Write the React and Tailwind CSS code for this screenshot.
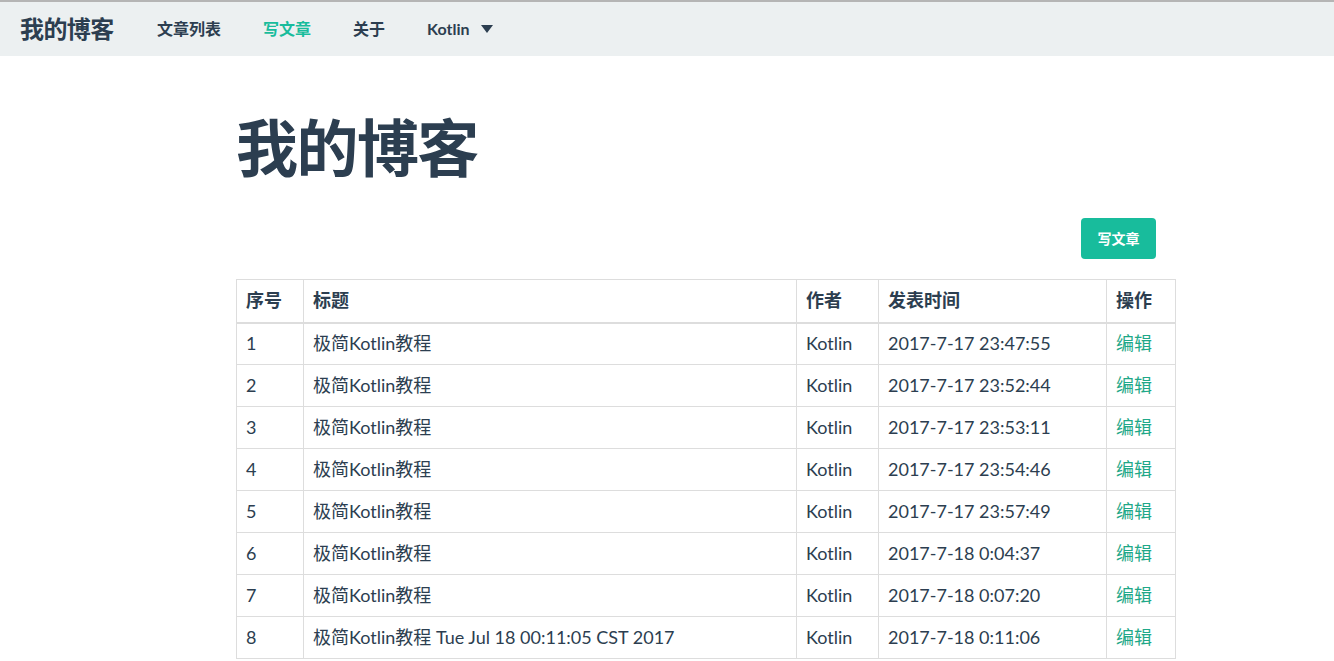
import { useState } from 'react'

const NAV = ['文章列表', '写文章', '关于']

const ROWS = [
  [1, '极简Kotlin教程', '2017-7-17 23:47:55'],
  [2, '极简Kotlin教程', '2017-7-17 23:52:44'],
  [3, '极简Kotlin教程', '2017-7-17 23:53:11'],
  [4, '极简Kotlin教程', '2017-7-17 23:54:46'],
  [5, '极简Kotlin教程', '2017-7-17 23:57:49'],
  [6, '极简Kotlin教程', '2017-7-18 0:04:37'],
  [7, '极简Kotlin教程', '2017-7-18 0:07:20'],
  [8, '极简Kotlin教程 Tue Jul 18 00:11:05 CST 2017', '2017-7-18 0:11:06'],
]

export default function App() {
  const [active] = useState('写文章')

  return (
    <div className="min-h-screen bg-white text-[#2c3e50] font-['Lato','Noto_Sans_CJK_SC',sans-serif] border-t-2 border-[#b5b5b5]">
      {/* NAVBAR */}
      <header className="h-[54px] bg-[#ecf0f1] flex items-center">
        <div className="pl-5 text-[24px] font-bold tracking-tight w-[136px]">我的博客</div>
        <nav className="flex items-center">
          {NAV.map(n => (
            <a key={n} className={`px-[21px] text-[16px] font-bold ${n === active ? 'text-[#18bc9c]' : 'text-[#2c3e50]'}`}>
              {n}
            </a>
          ))}
          <a className="px-[21px] text-[16px] font-bold flex items-center gap-3">
            Kotlin
            <svg width="12" height="8" viewBox="0 0 12 8"><path d="M0 0h12L6 8z" fill="#2c3e50" /></svg>
          </a>
        </nav>
      </header>

      <main className="w-[940px] ml-[236px]">
        <h1 className="pt-[56px] text-[62px] leading-[72px] font-bold tracking-tight">我的博客</h1>

        <div className="flex justify-end pr-5 mt-[34px]">
          <button className="w-[75px] h-[41px] rounded bg-[#18bc9c] text-white text-[14px] font-bold">写文章</button>
        </div>

        <table className="mt-5 w-full border-collapse text-[18px]">
          <colgroup>
            <col className="w-[67px]" />
            <col className="w-[493px]" />
            <col className="w-[82px]" />
            <col className="w-[228px]" />
            <col />
          </colgroup>
          <thead>
            <tr className="h-[43px]">
              {['序号', '标题', '作者', '发表时间', '操作'].map(h => (
                <th key={h} className="border border-[#dddddd] border-b-2 text-left px-[9px] font-semibold">{h}</th>
              ))}
            </tr>
          </thead>
          <tbody>
            {ROWS.map(([id, title, time]) => (
              <tr key={id} className="h-[42px]">
                <td className="border border-[#dddddd] px-[9px]">{id}</td>
                <td className="border border-[#dddddd] px-[9px]">{title}</td>
                <td className="border border-[#dddddd] px-[9px]">Kotlin</td>
                <td className="border border-[#dddddd] px-[9px]">{time}</td>
                <td className="border border-[#dddddd] px-[9px] text-[#1fa888]">编辑</td>
              </tr>
            ))}
          </tbody>
        </table>
      </main>
    </div>
  )
}
